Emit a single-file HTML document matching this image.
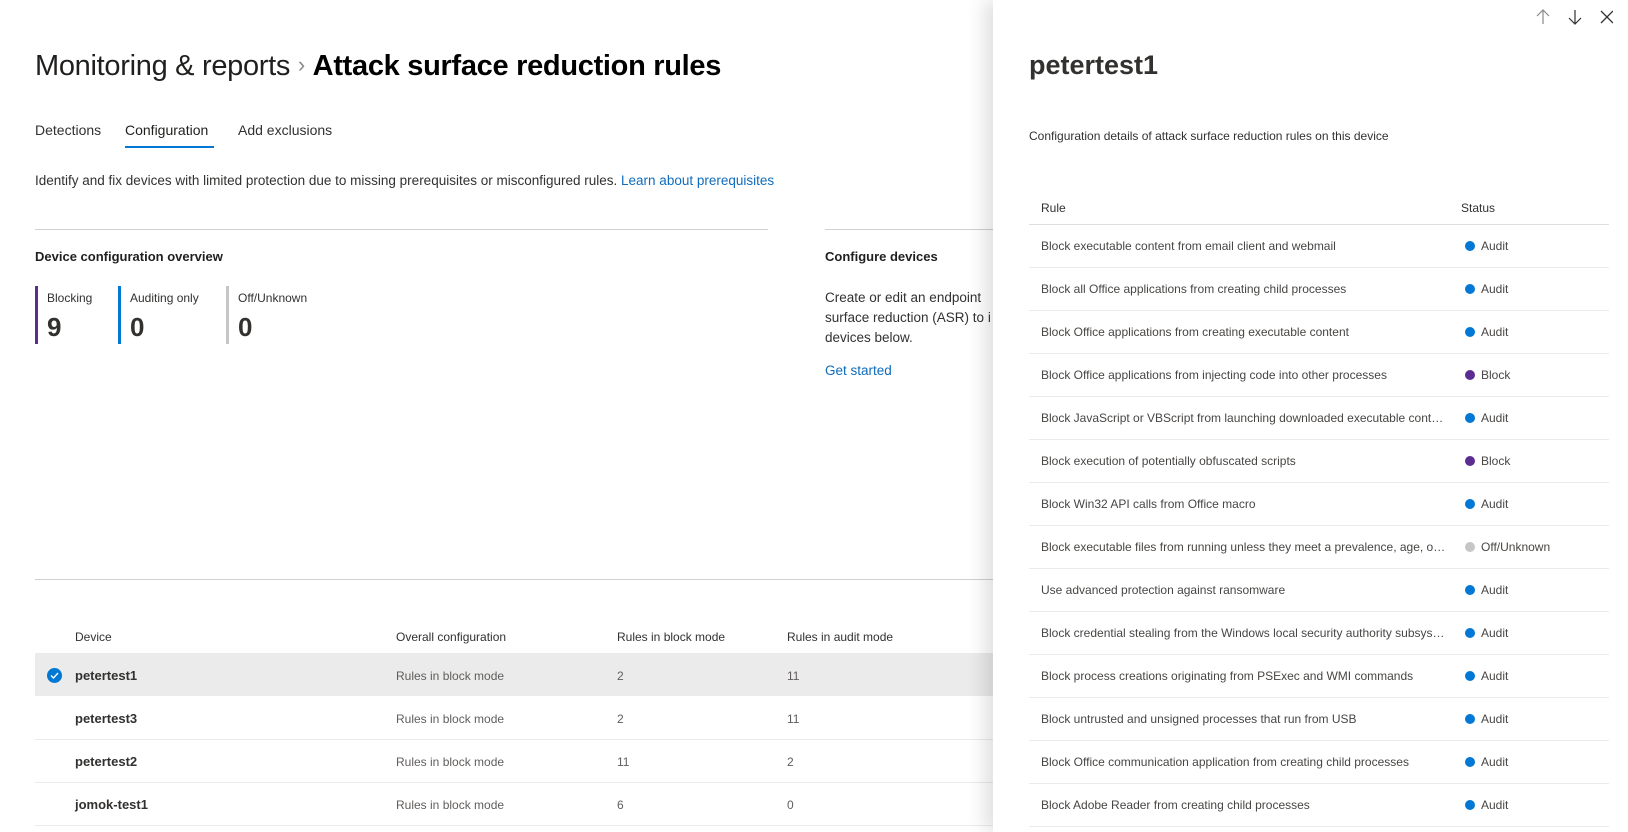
<!DOCTYPE html>
<html><head><meta charset="utf-8"><style>
*{margin:0;padding:0;box-sizing:border-box}
body{width:1628px;height:832px;overflow:hidden;background:#fff;font-family:"Liberation Sans",Arial,sans-serif;color:#323130;position:relative}
.a{position:absolute;white-space:nowrap}
.title{left:35px;top:50px;font-size:29px;color:#201f1e;letter-spacing:-0.3px}
.title b{font-weight:700;color:#000}
.tab{top:122px;font-size:14px;color:#323130}
.hr{position:absolute;height:1px;background:#d2d0ce}
.bar{position:absolute;width:3px;height:58px;top:286px}
.lbl{font-size:12px;top:291px}
.num{font-size:26px;font-weight:700;top:312px;color:#323130}
.th{font-size:12px;top:630px}
.row{position:absolute;left:35px;width:960px;height:43px}
.dn{font-size:13px;font-weight:700;color:#323130}
.cell{font-size:12px;color:#605e5c}
.panel{position:absolute;left:993px;top:0;width:635px;height:832px;background:#fff;box-shadow:-8px 0 18px rgba(0,0,0,0.13)}
.pr{position:absolute;left:36px;width:580px;height:43px;border-bottom:1px solid #edebe9;font-size:12px;color:#484644}
.pr .t{position:absolute;left:12px;top:14px;width:405px;overflow:hidden;text-overflow:ellipsis;white-space:nowrap}
.pr .d{position:absolute;left:436px;top:16px;width:10px;height:10px;border-radius:50%;background:#0078d4}
.pr .s{position:absolute;left:452px;top:14px}
</style></head><body>
<div class="a title">Monitoring &amp; reports <span style="color:#8a8886;font-size:22px;position:relative;top:-3px">›</span> <b>Attack surface reduction rules</b></div>
<div class="a tab" style="left:35px">Detections</div>
<div class="a tab" style="left:125px;color:#201f1e">Configuration</div>
<div style="position:absolute;left:125px;top:146px;width:89px;height:2px;background:#0078d4"></div>
<div class="a tab" style="left:238px">Add exclusions</div>
<div class="a" style="left:35px;top:173px;font-size:13.5px">Identify and fix devices with limited protection due to missing prerequisites or misconfigured rules. <span style="color:#0f6cbd">Learn about prerequisites</span></div>
<div class="hr" style="left:35px;top:229px;width:733px"></div>
<div class="hr" style="left:825px;top:229px;width:170px"></div>
<div class="a" style="left:35px;top:249px;font-size:13px;font-weight:700;color:#201f1e">Device configuration overview</div>
<div class="bar" style="left:35px;background:#5c2d91"></div>
<div class="a lbl" style="left:47px">Blocking</div><div class="a num" style="left:47px">9</div>
<div class="bar" style="left:118px;background:#0078d4"></div>
<div class="a lbl" style="left:130px">Auditing only</div><div class="a num" style="left:130px">0</div>
<div class="bar" style="left:226px;background:#c8c6c4"></div>
<div class="a lbl" style="left:238px">Off/Unknown</div><div class="a num" style="left:238px">0</div>
<div class="a" style="left:825px;top:249px;font-size:13px;font-weight:700;color:#201f1e">Configure devices</div>
<div class="a" style="left:825px;top:288px;font-size:13.5px;line-height:20px;color:#323130">Create or edit an endpoint<br>surface reduction (ASR) to i<br>devices below.</div>
<div class="a" style="left:825px;top:363px;font-size:13.5px;color:#0f6cbd">Get started</div>
<div class="hr" style="left:35px;top:579px;width:960px"></div>
<div class="a th" style="left:75px">Device</div>
<div class="a th" style="left:396px">Overall configuration</div>
<div class="a th" style="left:617px">Rules in block mode</div>
<div class="a th" style="left:787px">Rules in audit mode</div>
<div class="row" style="top:653px;background:#ebebeb"></div>
<div style="position:absolute;left:47px;top:668px;width:15px;height:15px;border-radius:50%;background:#0078d4"><svg width="15" height="15" viewBox="0 0 15 15"><path d="M4 7.5l2.5 2.5 4.5-5" stroke="#fff" stroke-width="1.4" fill="none"/></svg></div>
<div class="hr" style="left:35px;top:739px;width:960px;background:#edebe9"></div>
<div class="hr" style="left:35px;top:782px;width:960px;background:#edebe9"></div>
<div class="hr" style="left:35px;top:825px;width:960px;background:#edebe9"></div>
<div class="a dn" style="left:75px;top:668px">petertest1</div><div class="a cell" style="left:396px;top:669px">Rules in block mode</div><div class="a cell" style="left:617px;top:669px">2</div><div class="a cell" style="left:787px;top:669px">11</div>
<div class="a dn" style="left:75px;top:711px">petertest3</div><div class="a cell" style="left:396px;top:712px">Rules in block mode</div><div class="a cell" style="left:617px;top:712px">2</div><div class="a cell" style="left:787px;top:712px">11</div>
<div class="a dn" style="left:75px;top:754px">petertest2</div><div class="a cell" style="left:396px;top:755px">Rules in block mode</div><div class="a cell" style="left:617px;top:755px">11</div><div class="a cell" style="left:787px;top:755px">2</div>
<div class="a dn" style="left:75px;top:797px">jomok-test1</div><div class="a cell" style="left:396px;top:798px">Rules in block mode</div><div class="a cell" style="left:617px;top:798px">6</div><div class="a cell" style="left:787px;top:798px">0</div>

<div class="panel">
<svg class="a" style="left:540px;top:8px" width="80" height="18" viewBox="0 0 80 18">
<path d="M10 2v14M4 8l6-6 6 6" stroke="#8a8886" stroke-width="1.2" fill="none"/>
<path d="M42 2v14M36 10l6 6 6-6" stroke="#323130" stroke-width="1.2" fill="none"/>
<path d="M68 3l12 12M80 3l-12 12" stroke="#323130" stroke-width="1.3" fill="none"/>
</svg>
<div class="a" style="left:36px;top:50px;font-size:27px;font-weight:700;color:#323130">petertest1</div>
<div class="a" style="left:36px;top:129px;font-size:12px;color:#323130">Configuration details of attack surface reduction rules on this device</div>
<div class="a" style="left:48px;top:201px;font-size:12px;color:#323130">Rule</div>
<div class="a" style="left:468px;top:201px;font-size:12px;color:#323130">Status</div>
<div style="position:absolute;left:36px;top:224px;width:580px;height:1px;background:#e1dfdd"></div>
<div style="position:absolute;left:0;top:225px;width:635px">
<div class="pr" style="top:0"><span class="t">Block executable content from email client and webmail</span><span class="d"></span><span class="s">Audit</span></div>
<div class="pr" style="top:43px"><span class="t">Block all Office applications from creating child processes</span><span class="d"></span><span class="s">Audit</span></div>
<div class="pr" style="top:86px"><span class="t">Block Office applications from creating executable content</span><span class="d"></span><span class="s">Audit</span></div>
<div class="pr" style="top:129px"><span class="t">Block Office applications from injecting code into other processes</span><span class="d" style="background:#5c2d91"></span><span class="s">Block</span></div>
<div class="pr" style="top:172px"><span class="t">Block JavaScript or VBScript from launching downloaded executable content</span><span class="d"></span><span class="s">Audit</span></div>
<div class="pr" style="top:215px"><span class="t">Block execution of potentially obfuscated scripts</span><span class="d" style="background:#5c2d91"></span><span class="s">Block</span></div>
<div class="pr" style="top:258px"><span class="t">Block Win32 API calls from Office macro</span><span class="d"></span><span class="s">Audit</span></div>
<div class="pr" style="top:301px"><span class="t">Block executable files from running unless they meet a prevalence, age, or trusted list criterion</span><span class="d" style="background:#c8c6c4"></span><span class="s">Off/Unknown</span></div>
<div class="pr" style="top:344px"><span class="t">Use advanced protection against ransomware</span><span class="d"></span><span class="s">Audit</span></div>
<div class="pr" style="top:387px"><span class="t">Block credential stealing from the Windows local security authority subsystem</span><span class="d"></span><span class="s">Audit</span></div>
<div class="pr" style="top:430px"><span class="t">Block process creations originating from PSExec and WMI commands</span><span class="d"></span><span class="s">Audit</span></div>
<div class="pr" style="top:473px"><span class="t">Block untrusted and unsigned processes that run from USB</span><span class="d"></span><span class="s">Audit</span></div>
<div class="pr" style="top:516px"><span class="t">Block Office communication application from creating child processes</span><span class="d"></span><span class="s">Audit</span></div>
<div class="pr" style="top:559px"><span class="t">Block Adobe Reader from creating child processes</span><span class="d"></span><span class="s">Audit</span></div>
</div>
</div>
</body></html>
